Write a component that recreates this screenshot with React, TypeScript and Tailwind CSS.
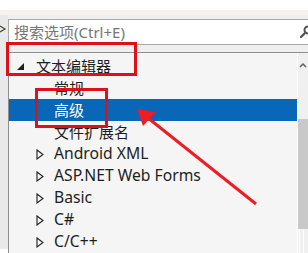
import React from "react";

const font = '"Noto Sans", "Noto Sans CJK SC", sans-serif';

function Row({
  indent,
  tri,
  label,
  selected,
  latin,
}: {
  indent: number;
  tri?: "open" | "closed";
  label: string;
  selected?: boolean;
  latin?: boolean;
}) {
  return (
    <div
      className={`flex h-[22px] items-center ${selected ? "bg-[#0867b6] text-white" : "text-[#1e1e1e]"}`}
    >
      <div className="relative h-full shrink-0" style={{ width: indent }}>
        {tri === "open" && (
          <svg className="absolute right-[12px] top-[8px]" width="7" height="7" viewBox="0 0 7 7">
            <polygon points="7,0 7,7 0,7" fill="#1e1e1e" />
          </svg>
        )}
        {tri === "closed" && (
          <svg className="absolute right-[10px] top-[6px]" width="8" height="11" viewBox="0 0 8 11">
            <polygon points="1,1 7,5.5 1,10" fill="none" stroke="#1e1e1e" strokeWidth="1.1" />
          </svg>
        )}
      </div>
      <span className={`whitespace-nowrap leading-none ${latin ? "text-[15.7px]" : "text-[15px]"}`}>{label}</span>
    </div>
  );
}

export default function App() {
  return (
    <div className="relative h-[253px] w-[308px] overflow-hidden bg-white" style={{ fontFamily: font }}>
      <div className="h-[10px] bg-white" />
      <div className="h-[5px] bg-[#f4f3ee]" />
      <div className="flex h-[238px]">
        {/* left sliver */}
        <div className="relative w-[8px] shrink-0 overflow-hidden bg-[#e9e9e9]">
          <svg className="absolute left-0 top-[9px]" width="8" height="10" viewBox="0 0 8 10">
            <polyline points="0,2 5,5 0,8" fill="none" stroke="#444" strokeWidth="1.2" />
          </svg>
          <div className="absolute bottom-0 left-0 h-[4px] w-[8px] bg-white" />
        </div>
        <div className="flex flex-1 flex-col bg-[#efefef]">
          <div className="h-[4px]" />
          {/* search box */}
          <div className="flex h-[28px] items-center border-y border-l border-[#a9a9a9] bg-white pl-[5px]">
            <span className="flex-1 whitespace-nowrap text-[15px] text-[#767676]">搜索选项(Ctrl+E)</span>
            <svg width="10" height="14" viewBox="0 0 10 14" className="mr-[-2px]">
              <circle cx="8" cy="5" r="3.5" fill="none" stroke="#555" strokeWidth="2" />
              <line x1="5.5" y1="7.5" x2="1" y2="12" stroke="#555" strokeWidth="2.4" strokeLinecap="round" />
            </svg>
          </div>
          <div className="h-[7px]" />
          {/* tree panel */}
          <div className="flex flex-1 border-l border-t border-[#8e8e8e] bg-[#f5f5f5]">
            <div className="flex-1 pt-[2px]">
              <Row indent={27} tri="open" label="文本编辑器" />
              <Row indent={45} label="常规" />
              <Row indent={45} label="高级" selected />
              <Row indent={45} label="文件扩展名" />
              <Row indent={45} tri="closed" label="Android XML" latin />
              <Row indent={45} tri="closed" label="ASP.NET Web Forms" latin />
              <Row indent={45} tri="closed" label="Basic" latin />
              <Row indent={45} tri="closed" label="C#" latin />
              <Row indent={45} tri="closed" label="C/C++" latin />
            </div>
            {/* scrollbar */}
            <div className="flex w-[11px] shrink-0 flex-col border-l border-white bg-[#f0f0f0]">
              <div className="flex h-[66px] justify-center pt-[9px]">
                <svg width="8" height="6" viewBox="0 0 8 6">
                  <polyline points="1,5 4,2 7,5" fill="none" stroke="#606060" strokeWidth="1.5" />
                </svg>
              </div>
              <div className="h-[110px] bg-[#c9c9c9]" />
              <div className="flex flex-1 gap-[3px] pl-[1px]">
                <div className="w-px bg-white" />
                <div className="w-px bg-white" />
              </div>
            </div>
          </div>
        </div>
      </div>

      {/* annotations */}
      <div className="absolute left-[6px] top-[42px] h-[34px] w-[131px] border-[3px] border-[#e0101a]" />
      <div className="absolute left-[35px] top-[88px] h-[40px] w-[73px] border-[3px] border-[#e0101a]" />
      <svg className="absolute left-0 top-0" width="308" height="253" viewBox="0 0 308 253">
        <line x1="256" y1="204" x2="148" y2="118" stroke="#ee1c24" strokeWidth="3" />
        <polygon points="137,109 156,112 143,126" fill="#ee1c24" />
      </svg>
    </div>
  );
}
